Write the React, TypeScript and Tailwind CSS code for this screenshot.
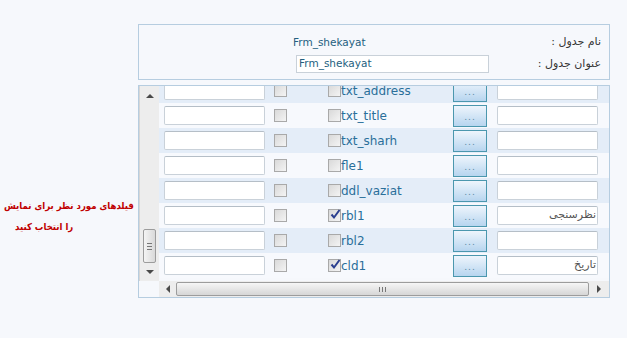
import React from 'react';

type Field = { name: string; checked: boolean; title: string };

const fields: Field[] = [
  { name: 'txt_address', checked: false, title: '' },
  { name: 'txt_title', checked: false, title: '' },
  { name: 'txt_sharh', checked: false, title: '' },
  { name: 'fle1', checked: false, title: '' },
  { name: 'ddl_vaziat', checked: false, title: '' },
  { name: 'rbl1', checked: true, title: 'نظرسنجی' },
  { name: 'rbl2', checked: false, title: '' },
  { name: 'cld1', checked: true, title: 'تاریخ' },
];

const CheckBox = ({ checked }: { checked?: boolean }) => (
  <span className="relative flex h-[13px] w-[13px] shrink-0 items-center justify-center border border-[#a9a9a9] bg-gradient-to-br from-[#d9d9d9] to-[#f4f4f4]">
    {checked && (
      <svg width="11" height="11" viewBox="0 0 11 11" className="absolute -top-[1px] left-[1px]">
        <path d="M1.5 5.5 L4 8.5 L9.5 1" fill="none" stroke="#2b3f8f" strokeWidth="2" />
      </svg>
    )}
  </span>
);

const TextBox = ({ value, width }: { value?: string; width: string }) => (
  <div
    dir="rtl"
    className={`flex h-[19px] ${width} items-center rounded-[2px] border border-[#c9d1d9] border-t-[#b5bec7] bg-white px-[1px] text-[11px] text-[#555] font-['DejaVu_Sans',sans-serif]`}
  >
    {value}
  </div>
);

const FieldRow = ({ field, index }: { field: Field; index: number }) => (
  <div className={`flex h-[25px] shrink-0 items-center pl-[5px] ${index % 2 === 0 ? 'bg-[#e4edf8]' : 'bg-[#f7f9fd]'}`}>
    <TextBox width="w-[101px]" />
    <div className="ml-[9px]">
      <CheckBox />
    </div>
    <div className="ml-[41px] flex w-[125px] items-center">
      <CheckBox checked={field.checked} />
      <span className="text-[12px] leading-none text-[#2a6f9a] font-['DejaVu_Sans',sans-serif]">{field.name}</span>
    </div>
    <button className="flex h-[22px] w-[34px] items-end justify-center border border-[#4b97ae] bg-gradient-to-b from-[#eef5fc] to-[#b7d5ef] pb-[4px] text-[9px] leading-none tracking-[1px] text-[#5b8ba5] font-['DejaVu_Sans',sans-serif]">
      ...
    </button>
    <div className="ml-[10px]">
      <TextBox width="w-[101px]" value={field.title} />
    </div>
  </div>
);

const Arrow = ({ dir }: { dir: 'up' | 'down' | 'left' | 'right' }) => {
  const pts = {
    up: '0,4 4,0 8,4',
    down: '0,0 8,0 4,4',
    left: '4,0 4,8 0,4',
    right: '0,0 0,8 4,4',
  }[dir];
  const vertical = dir === 'up' || dir === 'down';
  return (
    <svg width={vertical ? 8 : 4} height={vertical ? 4 : 8} viewBox={vertical ? '0 0 8 4' : '0 0 4 8'}>
      <polygon points={pts} fill="#4a4a4a" />
    </svg>
  );
};

const VScroll = () => (
  <div className="flex w-[20px] shrink-0 flex-col items-center border-l border-[#d6d6d6] bg-[#ededed]">
    <div className="flex h-[17px] items-center justify-center pt-[3px]">
      <Arrow dir="up" />
    </div>
    <div className="flex-1" />
    <div className="flex h-[34px] w-[13px] flex-col items-center justify-center gap-[2px] rounded-[2px] border border-[#9c9c9c] bg-gradient-to-r from-[#f4f4f4] to-[#d9d9d9]">
      <span className="h-px w-[5px] bg-[#777]" />
      <span className="h-px w-[5px] bg-[#777]" />
      <span className="h-px w-[5px] bg-[#777]" />
    </div>
    <div className="flex h-[18px] items-center justify-center">
      <Arrow dir="down" />
    </div>
  </div>
);

const HScroll = () => (
  <div className="flex h-[16px] shrink-0">
    <div className="w-[20px] bg-[#f6f8fc]" />
    <div className="flex flex-1 items-center bg-[#ededed]">
      <div className="flex w-[17px] justify-center">
        <Arrow dir="left" />
      </div>
      <div className="flex h-[14px] flex-1 items-center justify-center gap-[2px] rounded-[2px] border border-[#9c9c9c] bg-gradient-to-b from-[#f6f6f6] to-[#d6d6d6]">
        <span className="h-[5px] w-px bg-[#777]" />
        <span className="h-[5px] w-px bg-[#777]" />
        <span className="h-[5px] w-px bg-[#777]" />
      </div>
      <div className="flex w-[20px] justify-center">
        <Arrow dir="right" />
      </div>
    </div>
  </div>
);

export default function App() {
  return (
    <div className="flex h-[338px] w-[627px] bg-[#f6f8fc] font-['DejaVu_Sans',sans-serif]">
      <div className="w-[138px] shrink-0 pt-[195px]">
        <div className="flex flex-col items-start font-['DejaVu_Sans_Condensed','DejaVu_Sans',sans-serif] text-[9.5px] font-bold leading-[21px] text-[#c00000]">
          <div dir="rtl" className="ml-[4px] whitespace-nowrap">فیلدهای مورد نظر برای نمایش</div>
          <div dir="rtl" className="ml-[15px] whitespace-nowrap">را انتخاب کنید</div>
        </div>
      </div>

      <div className="flex w-[472px] flex-col gap-[5px] pt-[24px]">
        <div className="flex h-[56px] flex-col gap-[4px] border border-[#b6cde0] pt-[9px]">
          <div className="flex h-[17px] items-center">
            <span className="ml-[154px] text-[10.5px] text-[#245f80]">Frm_shekayat</span>
            <span dir="rtl" className="ml-auto mr-[8px] text-[11px] text-[#333]">نام جدول :</span>
          </div>
          <div className="flex h-[18px] items-center">
            <div className="ml-[157px] flex h-[18px] w-[193px] items-center border border-[#c9d1d9] bg-white pl-[2px] text-[10.5px] text-[#245f80]">
              Frm_shekayat
            </div>
            <span dir="rtl" className="ml-auto mr-[8px] text-[11px] text-[#333]">عنوان جدول :</span>
          </div>
        </div>

        <div className="flex h-[213px] flex-col border border-[#b6cde0]">
          <div className="flex h-[195px]">
            <VScroll />
            <div className="flex flex-1 flex-col overflow-hidden">
              <div className="-mt-[8px] flex flex-col">
                {fields.map((f, i) => (
                  <FieldRow key={f.name} field={f} index={i} />
                ))}
              </div>
            </div>
          </div>
          <HScroll />
        </div>
      </div>
    </div>
  );
}
